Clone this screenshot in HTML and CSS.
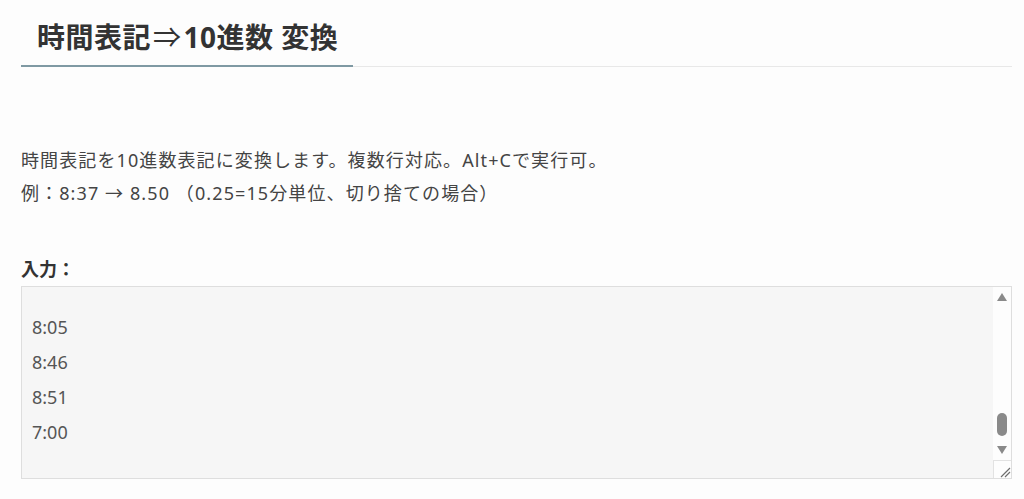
FILE: index.html
```html
<!DOCTYPE html>
<html lang="ja">
<head>
    <meta charset="UTF-8">
    <meta name="viewport" content="width=device-width, initial-scale=1.0">
    <title>時間表記⇒10進数 変換</title>
    <link rel="stylesheet" href="styles.css">
</head>
<body>
    <div class="page">
        <div class="title-bar">
            <h1 class="title">時間表記<span class="arrow">⇒</span>10進数 変換</h1>
        </div>

        <p class="desc">時間表記を10進数表記に変換します。複数行対応。Alt+Cで実行可。<br>例：8:37 → 8.50 （0.25=15分単位、切り捨ての場合）</p>

        <label for="input" class="input-label">入力：</label>
        <div class="input-wrap">
            <textarea id="input" class="input-area">9:00
9:15
9:30
9:45
10:00
10:15
10:30
10:45
11:00
11:15
11:30
11:45
12:00
12:15
12:30
12:45
13:00
13:15
13:30
13:45
14:00
14:15
14:30
14:45
15:00
15:15
15:30

8:05
8:46
8:51
7:00</textarea>
            <div class="scrollbar" aria-hidden="true">
                <span class="sb-button"><span class="sb-up"></span></span>
                <span class="sb-track"><span class="sb-thumb"></span></span>
                <span class="sb-button"><span class="sb-down"></span></span>
                <span class="sb-corner">
                    <svg width="18" height="17" viewBox="0 0 18 17">
                        <path d="M16 7 L7 16 M16 11 L11 16" stroke="#6e6e6e" stroke-width="1.2" fill="none"/>
                    </svg>
                </span>
            </div>
        </div>
    </div>
<script>
    const input = document.getElementById('input');
    input.scrollTop = input.scrollHeight; // show the last lines, like after pasting
</script>
</body>
</html>
```

FILE: styles.css
```css
body {
    margin: 0;
    background-color: #fdfdfd;
    color: #444;
    font-family: "Noto Sans", "Noto Sans CJK JP", sans-serif;
    font-size: 18px;
}

.page {
    padding: 0 12px 0 21px;
}

.title-bar {
    border-bottom: 1px solid #e8e8e8;
}

.title {
    display: inline-block;
    margin: 0 0 -1px 0;
    padding: 17px 15px 8px 16px;
    font-size: 28px;
    line-height: 39px;
    font-weight: bold;
    letter-spacing: 0.5px;
    color: #333;
    border-bottom: 2px solid #7f99a3;
}

.title .arrow {
    font-weight: normal;
    font-family: "Noto Sans CJK JP", sans-serif;
    padding: 0 2px;
}

.desc {
    margin: 77px 0 43px 0;
    line-height: 33px;
    letter-spacing: 1.1px;
}

.input-label {
    display: block;
    font-weight: bold;
    line-height: 33px;
    color: #333;
}

.input-wrap {
    position: relative;
}

.input-area {
    display: block;
    width: 100%;
    height: 193px;
    box-sizing: border-box;
    padding: 10px 28px 28px 10px;
    border: 1px solid #dedede;
    background-color: #f6f6f6;
    color: #555;
    font-family: "Noto Sans", "Noto Sans CJK JP", sans-serif;
    font-size: 18px;
    line-height: 35px;
    overflow: hidden;
    resize: none;
}

/* drawn scrollbar, the headless browser hides the native one */
.scrollbar {
    position: absolute;
    top: 1px;
    right: 1px;
    bottom: 1px;
    width: 18px;
    display: flex;
    flex-direction: column;
    background-color: #fdfdfd;
}

.sb-button {
    height: 20px;
    display: flex;
    align-items: center;
    justify-content: center;
}

.sb-up, .sb-down {
    width: 0;
    height: 0;
    border-left: 5.5px solid transparent;
    border-right: 5.5px solid transparent;
}

.sb-up {
    border-bottom: 8px solid #8a8a8a;
}

.sb-down {
    border-top: 8px solid #8a8a8a;
}

.sb-track {
    flex: 1;
    display: flex;
    flex-direction: column;
    justify-content: flex-end;
    align-items: center;
    padding-bottom: 4px;
}

.sb-thumb {
    width: 10px;
    height: 23px;
    border-radius: 5px;
    background-color: #8a8a8a;
}

.sb-corner {
    height: 17px;
    border-top: 1px solid #e2e2e2;
    border-left: 1px solid #e2e2e2;
    background-color: #fdfdfd;
}

.sb-corner svg {
    display: block;
}
```
